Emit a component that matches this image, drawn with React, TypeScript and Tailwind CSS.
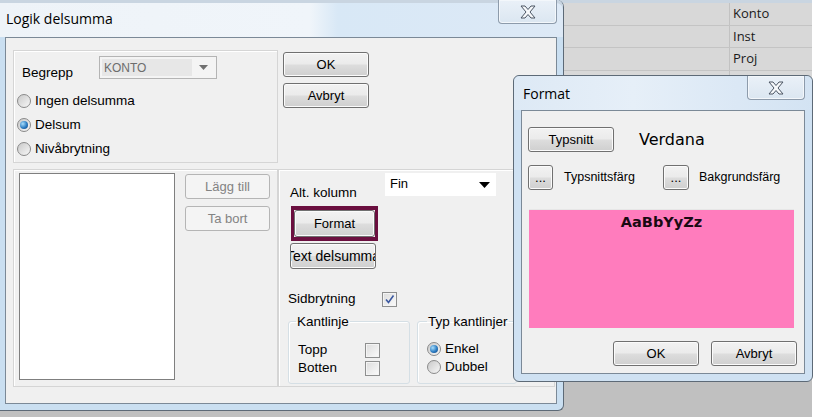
import React from "react";

const btnBase =
    "flex items-center justify-center whitespace-nowrap overflow-hidden rounded-[3px] border text-[13px]";
const btnFace =
    "border-[#707070] text-black bg-[linear-gradient(#f2f2f2_0%,#ebebeb_48%,#dddddd_52%,#cfcfcf_100%)] shadow-[inset_0_0_0_1px_#fbfbfb]";
const btnDisabled = "border-[#b5b5b5] text-[#838383] bg-[#f4f4f4]";

function Btn({ label, w = 86, h = 25, disabled = false, cls = "" }: { label: string; w?: number; h?: number; disabled?: boolean; cls?: string }) {
    return (
        <div className={`${btnBase} ${disabled ? btnDisabled : btnFace} ${cls}`} style={{ width: w, height: h }}>
            {label}
        </div>
    );
}

function Radio({ checked = false }: { checked?: boolean }) {
    return (
        <span className="flex h-[14px] w-[14px] shrink-0 items-center justify-center rounded-full border border-[#8a8a8a] bg-[linear-gradient(135deg,#c9c9c9,#f7f7f7)]">
            {checked && (
                <span className="h-[8px] w-[8px] rounded-full bg-[radial-gradient(circle_at_35%_35%,#a8defc,#2c7cc2_55%,#0c3d78)]" />
            )}
        </span>
    );
}

function Check({ checked = false }: { checked?: boolean }) {
    return (
        <span className="flex h-[15px] w-[15px] shrink-0 items-center justify-center border border-[#8e8f8f] bg-[linear-gradient(135deg,#dcdcdc,#fbfbfb)] shadow-[inset_0_0_0_1px_#f4f4f4]">
            {checked && (
                <svg width="11" height="11" viewBox="0 0 11 11">
                    <path d="M2 5.5 L4.5 8.5 L9.5 1.5" fill="none" stroke="#3b58a0" strokeWidth="1.6" />
                </svg>
            )}
        </span>
    );
}

function CloseBtn({ w }: { w: number }) {
    return (
        <div
            className="flex h-[24px] items-center justify-center rounded-b-[4px] border border-t-0 border-[#8d9bab] bg-[linear-gradient(#eaf1f8,#dbe6f1)] shadow-[inset_0_0_0_1px_#f3f7fb]"
            style={{ width: w }}
        >
            <svg width="18" height="14" viewBox="0 0 18 14">
                <polygon
                    points="2,1 6,1 9,4.5 12,1 16,1 11,7 16,13 12,13 9,9.5 6,13 2,13 7,7"
                    fill="#f7f9fb"
                    stroke="#4b5563"
                    strokeWidth="1"
                    strokeLinejoin="round"
                />
            </svg>
        </div>
    );
}

const panel = "border border-[#d5d5d5] shadow-[inset_1px_1px_0_#ffffff]";

const gridRows = ["Konto", "Inst", "Proj", "Ant", "", "", "", ""];

export default function App() {
    return (
        <div className="relative h-[420px] w-[820px] overflow-hidden bg-white font-['Liberation_Sans',Arial,sans-serif] text-black">
            {/* background grid */}
            <div className="flex h-[417px] w-[812px] flex-col bg-[#c0c0c0]">
                <div className="h-[3px] bg-[#c9d5e1]" />
                {gridRows.map((r, i) => (
                    <div key={i} className="flex h-[22.5px] border-b border-[#c4c4c4] bg-[#d8d8d8]">
                        <div className="flex-1 border-r border-[#c2c2c2]" />
                        <div className="flex w-[82px] items-center pl-[3px] font-['Open_Sans',sans-serif] text-[13px] text-[#1a1a1a]">
                            {r}
                        </div>
                    </div>
                ))}
            </div>

            {/* Logik delsumma window */}
            <div className="absolute left-0 top-0 flex h-[411px] w-[564px] flex-col rounded-tr-[7px] rounded-br-[6px] border-r border-b border-[#5d6a77] bg-[#cadff1]">
                <div className="flex h-[37px] items-start justify-between rounded-tr-[7px] bg-[linear-gradient(90deg,#eef3f8_0%,#f0f5fa_55%,#d8e8f6_60%,#dde9f6_100%)] shadow-[inset_0_3px_0_#c9d5e1]">
                    <span className="pl-[6px] pt-[9px] font-['Open_Sans',sans-serif] text-[14px] leading-[20px] text-black">
                        Logik delsumma
                    </span>
                    <div className="mr-[6px]">
                        <CloseBtn w={59} />
                    </div>
                </div>
                <div className="ml-[5px] h-[367px] w-[552px] border border-[#7b8997] bg-[#f0f0f0] text-[13.5px]">
                    <div className="flex pl-[7px] pt-[12px]">
                        {/* Begrepp panel */}
                        <div className={`h-[113px] w-[265px] pl-[3px] pt-[5px] ${panel}`}>
                            <div className="flex">
                                <span className="w-[82px] pl-[5px] pt-[9px] leading-[16px]">Begrepp</span>
                                <div className="flex h-[23px] w-[118px] items-center border border-[#b4b4b4] bg-[#f4f4f4] p-[2px]">
                                    <div className="flex h-full flex-1 items-center bg-[#e7e7e7] pl-[2px] text-[12px] text-[#6d6d6d]">
                                        KONTO
                                    </div>
                                    <div className="flex w-[22px] justify-center">
                                        <svg width="9" height="5" viewBox="0 0 9 5">
                                            <polygon points="0,0 9,0 4.5,5" fill="#707070" />
                                        </svg>
                                    </div>
                                </div>
                            </div>
                            <div className="mt-[8px] flex flex-col">
                                {[
                                    ["Ingen delsumma", false],
                                    ["Delsum", true],
                                    ["Nivåbrytning", false],
                                ].map(([t, c]) => (
                                    <div key={t as string} className="flex h-[24px] items-center gap-[4px]">
                                        <Radio checked={c as boolean} />
                                        <span>{t as string}</span>
                                    </div>
                                ))}
                            </div>
                        </div>
                        <div className="flex flex-col gap-[6px] pl-[5px] pt-[2px]">
                            <Btn label="OK" w={86} h={25} cls="text-[13.5px]" />
                            <Btn label="Avbryt" w={86} h={25} cls="text-[13.5px]" />
                        </div>
                    </div>

                    <div className="mt-[6px] flex pl-[7px]">
                        {/* list panel */}
                        <div className={`flex h-[218px] w-[265px] pl-[5px] pt-[3px] ${panel}`}>
                            <div className="h-[207px] w-[156px] border border-[#7f7f7f] bg-white" />
                            <div className="ml-[10px] mt-[1px] flex flex-col gap-[7px]">
                                <Btn label="Lägg till" w={85} h={25} disabled cls="text-[13.5px]" />
                                <Btn label="Ta bort" w={85} h={25} disabled cls="text-[13.5px]" />
                            </div>
                        </div>

                        {/* settings panel */}
                        <div className={`h-[218px] w-[277px] pt-[3px] ${panel}`}>
                            <div className="flex pl-[11px]">
                                <span className="w-[95px] pt-[12px] leading-[16px]">Alt. kolumn</span>
                                <div className="flex h-[23px] w-[111px] items-start justify-between bg-white pl-[5px] pr-[6px] pt-[1px]">
                                    <span className="text-[13px]">Fin</span>
                                    <svg className="mt-[8px]" width="11" height="6" viewBox="0 0 11 6">
                                        <polygon points="0,0 11,0 5.5,6" fill="#000" />
                                    </svg>
                                </div>
                            </div>
                            <div className="ml-[12px] mt-[5px] w-[87px] border-x-[3px] border-y-[4px] border-[#6b0f3f]">
                                <Btn label="Format" w={81} h={27} cls="text-[13.5px]" />
                            </div>
                            <div className="ml-[11px] mt-[2px]">
                                <Btn label="Text delsumma" w={86} h={26} cls="text-[14px]" />
                            </div>
                            <div className="ml-[9px] mt-[23px] flex h-[15px] items-center">
                                <span className="w-[94px]">Sidbrytning</span>
                                <Check checked />
                            </div>
                            <div className="ml-[9px] mt-[7px] flex gap-[7px]">
                                <fieldset className="h-[70px] w-[122px] rounded-[3px] border border-[#d5dfe5] pl-[9px] shadow-[inset_1px_1px_0_#ffffff]">
                                    <legend className="ml-[-2px] px-[1px] leading-[15px]">Kantlinje</legend>
                                    <div className="mt-[12px] flex h-[18px] items-center">
                                        <span className="w-[67px]">Topp</span>
                                        <Check />
                                    </div>
                                    <div className="flex h-[18px] items-center">
                                        <span className="w-[67px]">Botten</span>
                                        <Check />
                                    </div>
                                </fieldset>
                                <fieldset className="h-[70px] w-[100px] rounded-[3px] border border-[#d5dfe5] pl-[9px] shadow-[inset_1px_1px_0_#ffffff]">
                                    <legend className="ml-[0px] whitespace-nowrap px-[1px] leading-[15px]">Typ kantlinjer</legend>
                                    <div className="mt-[11px] flex h-[18px] items-center gap-[4px]">
                                        <Radio checked />
                                        <span>Enkel</span>
                                    </div>
                                    <div className="flex h-[18px] items-center gap-[4px]">
                                        <Radio />
                                        <span>Dubbel</span>
                                    </div>
                                </fieldset>
                            </div>
                        </div>
                    </div>
                </div>
            </div>

            {/* Format window */}
            <div className="absolute left-[513px] top-[75px] flex h-[307px] w-[300px] flex-col rounded-[6px] border border-[#5d6a77] bg-[#cfe1f2]">
                <div className="flex h-[34px] items-start justify-between rounded-t-[6px] bg-[linear-gradient(90deg,#dde9f5_0%,#e6eff8_40%,#d3e3f3_100%)]">
                    <span className="pl-[9px] pt-[8px] font-['Open_Sans',sans-serif] text-[14px] leading-[20px]">Format</span>
                    <div className="mr-[7px]">
                        <CloseBtn w={58} />
                    </div>
                </div>
                <div className="ml-[7px] h-[264px] w-[284px] border border-[#7b8997] bg-[#f0f0f0] pl-[6px] pt-[16px] text-[12.5px]">
                    <div className="flex items-center">
                        <Btn label="Typsnitt" w={86} h={25} cls="text-[12.5px]" />
                        <span className="ml-[25px] font-['DejaVu_Sans',sans-serif] text-[16px]">Verdana</span>
                    </div>
                    <div className="mt-[13px] flex items-center">
                        <div className="flex w-[135px] items-center">
                            <Btn label="..." w={25} h={25} cls="text-[12px]" />
                            <span className="ml-[11px]">Typsnittsfärg</span>
                        </div>
                        <Btn label="..." w={26} h={25} cls="text-[12px]" />
                        <span className="ml-[10px]">Bakgrundsfärg</span>
                    </div>
                    <div className="ml-[1px] mt-[19px] flex h-[119px] w-[265px] justify-center border-t border-[#e6e6e6] bg-[#ff7cbd] pt-[2px]">
                        <span className="font-['DejaVu_Sans',sans-serif] text-[14.5px] font-bold leading-[20px] text-[#1a0a12]">
                            AaBbYyZz
                        </span>
                    </div>
                    <div className="mt-[13px] flex justify-end gap-[12px] pr-[7px]">
                        <Btn label="OK" w={86} h={25} cls="text-[13px]" />
                        <Btn label="Avbryt" w={86} h={25} cls="text-[13px]" />
                    </div>
                </div>
            </div>
        </div>
    );
}
